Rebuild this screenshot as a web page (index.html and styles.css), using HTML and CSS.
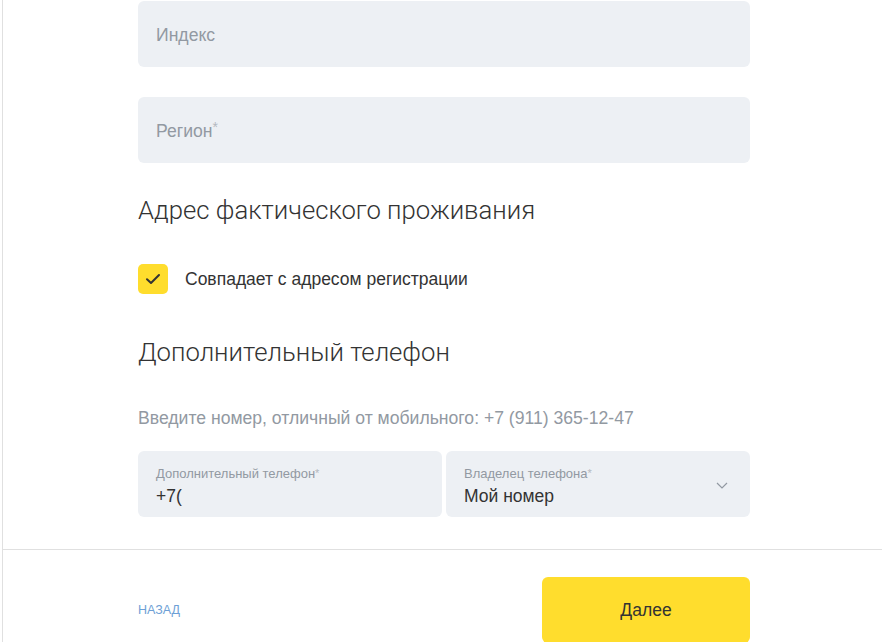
FILE: index.html
```html
<!DOCTYPE html>
<html lang="ru">
<head>
<meta charset="utf-8">
<link rel="stylesheet" href="styles.css">
</head>
<body>
<div class="card">
  <div class="content">
    <div class="field"><span class="placeholder">Индекс</span></div>
    <div class="field gap"><span class="placeholder">Регион<span class="req">*</span></span></div>
    <h2 class="heading h-first">Адрес фактического проживания</h2>
    <label class="check">
      <span class="box"><svg width="16" height="12" viewBox="0 0 16 12"><path d="M2 6.2 L6 10 L14 2" fill="none" stroke="#333" stroke-width="2" stroke-linecap="round" stroke-linejoin="round"/></svg></span>
      <span class="check-label">Совпадает с адресом регистрации</span>
    </label>
    <h2 class="heading h-second">Дополнительный телефон</h2>
    <p class="hint">Введите номер, отличный от мобильного: +7 (911) 365-12-47</p>
    <div class="row">
      <div class="field filled">
        <span class="label">Дополнительный телефон<span class="req">*</span></span>
        <span class="value">+7(</span>
      </div>
      <div class="field filled select">
        <span class="label">Владелец телефона<span class="req">*</span></span>
        <span class="value">Мой номер</span>
        <svg class="chevron" width="12" height="7" viewBox="0 0 12 7"><path d="M1 1 L6 6 L11 1" fill="none" stroke="#9299a2" stroke-width="1.2"/></svg>
      </div>
    </div>
  </div>
  <div class="footer">
    <a class="back" href="#">Назад</a>
    <button class="next">Далее</button>
  </div>
</div>
</body>
</html>
```

FILE: styles.css
```css
html, body {
  margin: 0;
  padding: 0;
  background: #fff;
  font-family: "Liberation Sans", Arial, sans-serif;
  color: #333;
}
.card {
  margin-left: 2px;
  border-left: 1px solid #e0e0e0;
  min-height: 642px;
}
.content {
  padding: 1px 0 32px 135px;
  width: 612px;
}
.field {
  box-sizing: border-box;
  height: 66px;
  background: #edf0f4;
  border-radius: 6px;
  padding: 3px 18px 0;
  display: flex;
  align-items: center;
  position: relative;
}
.field.gap {
  margin-top: 30px;
}
.placeholder {
  font-size: 17.6px;
  color: #9299a2;
}
.req {
  color: #b4b9c0;
  font-size: 14px;
  vertical-align: top;
  position: relative;
  top: -2px;
}
.heading {
  font-family: Roboto, sans-serif;
  font-weight: 300;
  font-size: 25.7px;
  line-height: 32px;
  margin: 0;
  color: #333;
}
.h-first {
  margin-top: 31px;
}
.check {
  display: flex;
  align-items: center;
  margin-top: 38px;
}
.box {
  width: 30px;
  height: 30px;
  border-radius: 5px;
  background: #ffdd2d;
  display: flex;
  align-items: center;
  justify-content: center;
}
.check-label {
  margin-left: 17px;
  font-size: 17.5px;
  color: #333;
}
.h-second {
  margin-top: 42px;
}
.hint {
  margin: 40px 0 0;
  font-size: 17.6px;
  line-height: 20px;
  color: #9299a2;
}
.row {
  display: flex;
  gap: 4px;
  margin-top: 23px;
}
.row .field {
  flex: 1;
}
.filled {
  flex-direction: column;
  align-items: flex-start;
  justify-content: center;
  padding-top: 4px;
}
.label {
  font-size: 13px;
  line-height: 16px;
  color: #9299a2;
}
.label .req {
  font-size: 11px;
  top: -1px;
}
.value {
  font-size: 17.5px;
  line-height: 22px;
  color: #333;
  margin-top: 3px;
}
.chevron {
  position: absolute;
  right: 22px;
  top: 31px;
}
.footer {
  border-top: 1px solid #e0e0e0;
  padding: 27px 0 0 135px;
  display: flex;
  align-items: center;
}
.back {
  width: 404px;
  font-size: 12.5px;
  text-transform: uppercase;
  color: #6d9fd6;
  text-decoration: none;
  font-family: "Liberation Sans", Arial, sans-serif;
}
.next {
  width: 208px;
  height: 66px;
  background: #ffdd2d;
  border: none;
  border-radius: 6px;
  font-family: "Liberation Sans", Arial, sans-serif;
  font-size: 17.5px;
  color: #333;
}
```
